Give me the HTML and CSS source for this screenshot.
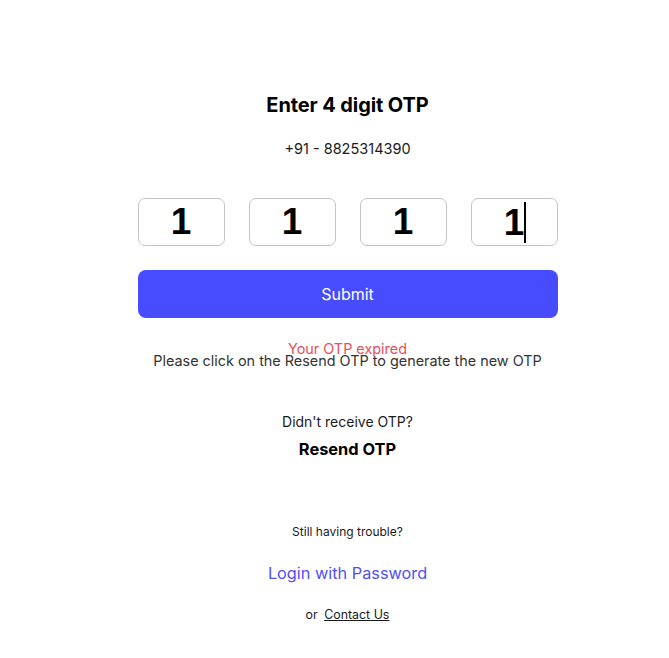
FILE: index.html
```html
<!DOCTYPE html>
<html lang="en">
<head>
<meta charset="utf-8">
<title>Enter OTP</title>
<link rel="stylesheet" href="styles.css">
</head>
<body>
<main class="page">
  <section class="otp-card">
    <h1 class="title">Enter 4 digit OTP</h1>
    <p class="phone">+91 - 8825314390</p>
    <div class="otp-inputs">
      <div class="otp-box">1</div>
      <div class="otp-box">1</div>
      <div class="otp-box">1</div>
      <div class="otp-box"><span class="digit-caret">1</span></div>
    </div>
    <button class="submit-btn" type="button">Submit</button>
    <div class="messages">
      <p class="error">Your OTP expired</p>
      <p class="hint">Please click on the Resend OTP to generate the new OTP</p>
    </div>
    <p class="didnt">Didn't receive OTP?</p>
    <p class="resend">Resend OTP</p>
    <p class="trouble">Still having trouble?</p>
    <p class="login">Login with Password</p>
    <p class="contact">or <a class="contact-link" href="#">Contact Us</a></p>
  </section>
</main>
</body>
</html>
```
FILE: styles.css
```css
* { box-sizing: border-box; }
html, body { margin: 0; padding: 0; background: #fff; }
body { font-family: Inter, "Noto Sans", "Liberation Sans", sans-serif; color: #1a1a1a; }
.page { padding-left: 26px; display: flex; justify-content: center; }
.otp-card { width: 420px; display: flex; flex-direction: column; align-items: center; padding-top: 92px; }
p { margin: 0; }
.title { margin: 0; font-size: 20px; font-weight: 700; line-height: 26px; color: #000; letter-spacing: -0.1px; }
.phone { margin-top: 22px; font-size: 14.5px; line-height: 18px; color: #1a1a1a; }
.otp-inputs { margin-top: 40px; width: 100%; display: flex; gap: 24px; }
.otp-box { flex: 1; height: 48px; border: 1px solid #c4c4c4; border-radius: 7px; display: flex; align-items: center; justify-content: center; font-family: "Liberation Sans", Arial, sans-serif; font-weight: 700; font-size: 37px; color: #000; }
.digit-caret { border-right: 2px solid #000; line-height: 41px; margin-left: 2px; }
.submit-btn { margin-top: 24px; width: 100%; height: 48px; border: none; border-radius: 8px; background: #484cff; color: #fff; font-family: Inter, "Noto Sans", sans-serif; font-size: 16px; }
.messages { margin-top: 22px; display: flex; flex-direction: column; align-items: center; }
.error { color: #e8505b; font-size: 14.4px; line-height: 18px; }
.hint { margin-top: -6px; color: #333; font-size: 14.4px; line-height: 18px; }
.didnt { margin-top: 43px; font-size: 14px; line-height: 18px; color: #1a1a1a; }
.resend { margin-top: 8px; font-size: 16.4px; font-weight: 700; line-height: 20px; color: #000; }
.trouble { margin-top: 65px; font-size: 12px; line-height: 16px; color: #1a1a1a; }
.login { margin-top: 22px; font-size: 16.3px; line-height: 22px; color: #5050f5; }
.contact { margin-top: 23px; font-size: 12.4px; line-height: 16px; color: #1a1a1a; }
.contact-link { margin-left: 3px; color: #1a1a1a; text-decoration: underline; }
```
